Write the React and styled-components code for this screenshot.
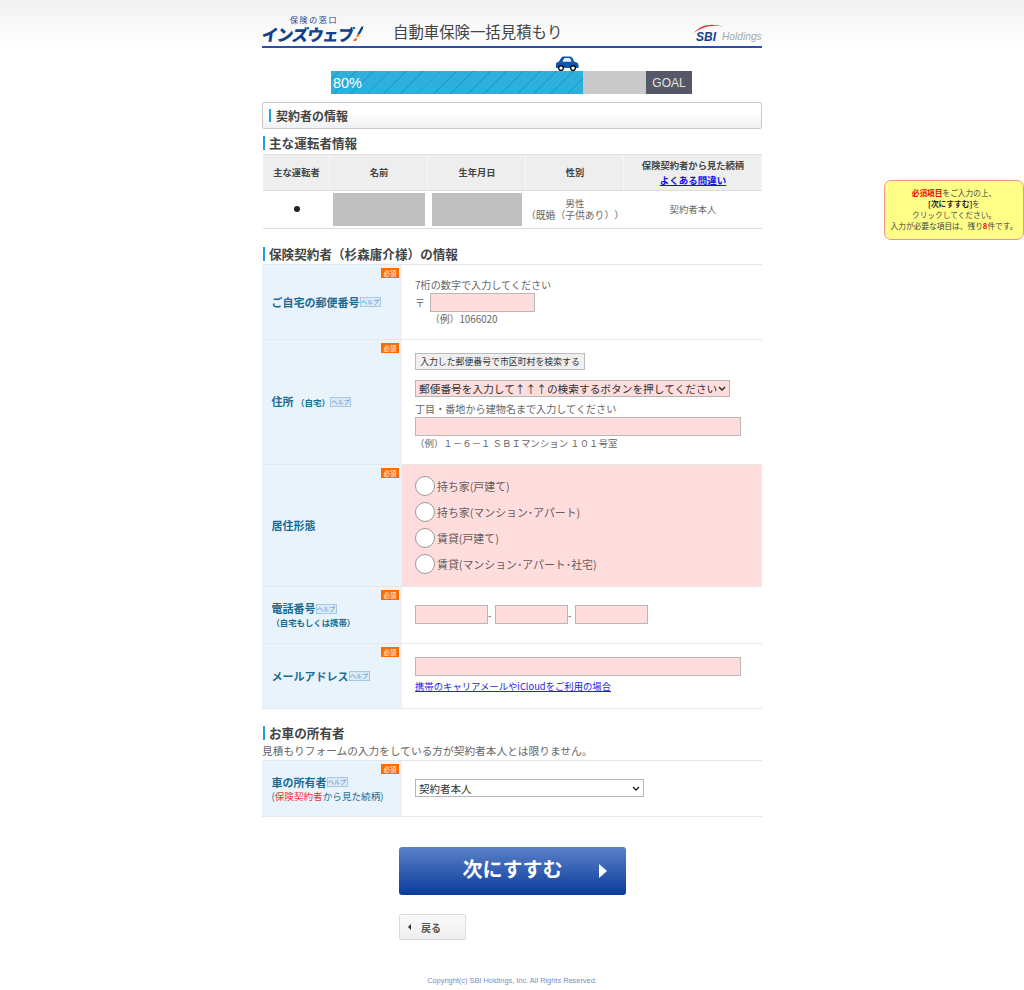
import React from "react";
import styled, { createGlobalStyle } from "styled-components";

const FONT = `"Noto Sans CJK JP", "Liberation Sans", sans-serif`;

const CHEVRON =
  "url(\"data:image/svg+xml,%3Csvg xmlns='http://www.w3.org/2000/svg' width='8' height='5' viewBox='0 0 8 5'%3E%3Cpath d='M1 1l3 3 3-3' fill='none' stroke='%23222' stroke-width='1.4'/%3E%3C/svg%3E\")";

const GlobalStyle = createGlobalStyle`
  html, body {
    margin: 0;
    padding: 0;
    background: #fff;
  }
  body {
    font-family: ${FONT};
    color: #555;
    font-size: 10px;
    text-spacing-trim: space-all;
  }
  * {
    box-sizing: border-box;
  }
`;

const Page = styled.div`
  position: relative;
  height: 990px;
  overflow: hidden;
  background: linear-gradient(#f2f2f2, #fff 50px);
`;

const Container = styled.div`
  width: 500px;
  margin: 0 auto;
  padding-top: 14px;
`;

const Header = styled.header`
  height: 34px;
  border-bottom: 2px solid #2b4ea8;
  display: flex;
  align-items: flex-end;
  position: relative;
`;

const Logo = styled.div`
  width: 131px;
  height: 31px;
  flex: none;
  display: flex;
  flex-direction: column;
  align-items: flex-start;
  line-height: 1;
  .sub {
    font-size: 8px;
    letter-spacing: 1.6px;
    color: #16428f;
    margin-left: 28px;
    height: 9px;
    padding-top: 1px;
  }
  .main {
    display: block;
    font-size: 16.4px;
    font-weight: 900;
    color: #12408c;
    white-space: nowrap;
    letter-spacing: -1.1px;
    line-height: 19px;
    transform: skewX(-8deg);
    b {
      display: inline-block;
      margin-left: 2px;
      font-family: "Liberation Sans", sans-serif;
      font-size: 21px;
      font-style: italic;
      line-height: 19px;
      color: transparent;
      background: linear-gradient(#12408c 55%, #f26a10 55%);
      -webkit-background-clip: text;
      background-clip: text;
      transform: skewX(-14deg);
    }
  }
`;

const Title = styled.h1`
  margin: 0 0 4px;
  font-size: 15.4px;
  font-weight: 400;
  line-height: 22px;
  color: #444;
`;

const Sbi = styled.div`
  margin-left: auto;
  width: 68px;
  height: 24px;
  position: relative;
  display: flex;
  align-items: flex-end;
  padding-bottom: 4px;
  font-family: "Liberation Sans", sans-serif;
  line-height: 10px;
  svg {
    position: absolute;
    left: -1px;
    top: -1px;
  }
  .sbi {
    font-size: 12px;
    font-weight: 700;
    font-style: italic;
    color: #12408c;
    margin-left: 2px;
  }
  .hold {
    font-size: 10.2px;
    font-style: italic;
    color: #a3a8ae;
    margin-left: 6px;
  }
`;

const ProgressWrap = styled.div`
  position: relative;
  width: 361px;
  height: 23px;
  margin: 23px 0 0 69px;
  display: flex;
`;

const ProgressFill = styled.div`
  width: 252px;
  padding-left: 2px;
  font-family: "Liberation Sans", sans-serif;
  font-size: 14.4px;
  line-height: 24px;
  color: #fff;
  background: repeating-linear-gradient(
    -45deg,
    #2fb0dc 0 10.5px,
    #1f9fcf 10.5px 11.8px
  );
`;

const ProgressRest = styled.div`
  flex: 1;
  background: #c9c9c9;
`;

const Goal = styled.div`
  width: 46px;
  background: #555866;
  color: #e4e4e4;
  font-family: "Liberation Sans", sans-serif;
  font-size: 12px;
  line-height: 24px;
  text-align: center;
`;

const Car = styled.svg`
  position: absolute;
  left: 224px;
  top: -15px;
`;

const Panel = styled.div`
  height: 27px;
  margin-top: 8px;
  border: 1px solid #c9c9c9;
  border-radius: 2px;
  background: linear-gradient(#fff 40%, #eff0f2);
  display: flex;
  align-items: center;
  padding-left: 6px;
  font-size: 12px;
  font-weight: 700;
  color: #444;
  &::before {
    content: "";
    width: 2px;
    height: 13px;
    background: #1f9fe0;
    margin-right: 5px;
  }
`;

const Heading = styled.h2`
  margin: ${(p) => p.$top}px 0 0 1px;
  height: 16px;
  display: flex;
  align-items: center;
  font-size: 12.6px;
  font-weight: 700;
  line-height: 16px;
  color: #444;
  &::before {
    content: "";
    width: 2px;
    height: 14px;
    background: #1f9fe0;
    margin-right: 4px;
  }
`;

const DriverTable = styled.div`
  margin: 3px 0 0 1px;
  display: grid;
  grid-template-columns: 67px 98px 98px 98px 138px;
  border-top: 1px solid #e2e2e2;
  border-bottom: 1px solid #ddd;
`;

const HeadCell = styled.div`
  height: 36px;
  background: #eee;
  box-shadow: inset -1px 0 #f8f8f8;
  border-bottom: 1px solid #ddd;
  display: flex;
  flex-direction: column;
  align-items: center;
  justify-content: center;
  font-size: 9.3px;
  font-weight: 700;
  line-height: 15px;
  color: #444;
  a {
    font-size: 9.5px;
    color: #1414e6;
    text-decoration: underline;
  }
`;

const BodyCell = styled.div`
  height: 37px;
  padding-bottom: 1px;
  display: flex;
  flex-direction: column;
  align-items: center;
  justify-content: center;
  font-size: 9.4px;
  line-height: 12px;
  color: #666;
  .wide {
    font-size: 9.8px;
  }
`;

const Dot = styled.span`
  width: 6px;
  height: 6px;
  border-radius: 50%;
  background: #222;
`;

const Masked = styled.div`
  width: ${(p) => p.$w}px;
  height: 33px;
  background: #c0c0c0;
`;

const FormTable = styled.div`
  margin-top: 2px;
  border-top: 1px solid #e6e6e6;
`;

const Row = styled.div`
  display: grid;
  grid-template-columns: 140px 360px;
  height: ${(p) => p.$h}px;
  border-bottom: 1px solid #e6e8ea;
`;

const LabelCell = styled.div`
  position: relative;
  background: #e9f3fb;
  display: flex;
  flex-direction: column;
  justify-content: center;
  padding-left: 9.5px;
  color: #1a6c94;
  font-size: 11px;
  font-weight: 700;
  line-height: 15px;
`;

const LabelLine = styled.div`
  display: flex;
  align-items: center;
  white-space: nowrap;
  small {
    font-size: 8.5px;
  }
`;

const SubLabel = styled.div`
  font-size: ${(p) => (p.$plain ? 9.6 : 8.4)}px;
  font-weight: ${(p) => (p.$plain ? 400 : 700)};
  line-height: 13px;
  white-space: nowrap;
  em {
    font-style: normal;
    color: #f0323c;
  }
`;

const Required = styled.span`
  position: absolute;
  right: 3px;
  top: 3px;
  width: 18px;
  height: 10px;
  background: #ff6a00;
  color: #ffd9bd;
  font-size: 6.5px;
  line-height: 10px;
  text-align: center;
`;

const Help = styled.span`
  display: inline-block;
  width: 21px;
  height: 10px;
  background: #dbe9f7;
  border: 1px solid #a9c8e4;
  color: #4e8fce;
  font-size: 6px;
  font-weight: 400;
  line-height: 8px;
  text-align: center;
`;

const FieldCell = styled.div`
  background: ${(p) => (p.$error ? "#ffdddd" : "#fff")};
  padding: ${(p) => p.$top || 0}px 0 0 13px;
  display: flex;
  flex-direction: column;
  align-items: flex-start;
  font-size: 10px;
  line-height: 14px;
  color: #666;
`;

const Hint = styled.div`
  line-height: 14px;
  font-size: 10.1px;
  margin-top: ${(p) => p.$mt || 0}px;
  margin-bottom: ${(p) => p.$mb || 0}px;
  white-space: nowrap;
`;

const PinkInput = styled.input`
  display: block;
  width: ${(p) => p.$w}px;
  height: 19px;
  padding: 0;
  background: #ffdddd;
  border: 1px solid #bdb6b6;
  outline: none;
`;

const ZipLine = styled.div`
  display: flex;
  align-items: center;
  gap: 5px;
`;

const Example = styled.div`
  margin-left: ${(p) => p.$left}px;
  font-size: ${(p) => p.$size}px;
  line-height: 14px;
  white-space: nowrap;
  color: #666;
`;

const SearchButton = styled.button`
  height: 17px;
  width: 170px;
  padding: 0;
  background: #efefef;
  border: 1px solid #bbb;
  font-family: ${FONT};
  font-size: 8.9px;
  line-height: 14px;
  white-space: nowrap;
  color: #333;
`;

const PickBox = styled.select`
  display: block;
  appearance: none;
  width: ${(p) => p.$w}px;
  height: ${(p) => p.$h}px;
  margin-top: ${(p) => p.$mt || 0}px;
  padding: 0 0 0 3px;
  background: ${(p) => (p.$error ? "#ffdddd" : "#fff")} ${CHEVRON} no-repeat right 3px center;
  border: 1px solid #b5b5b5;
  border-radius: 0;
  font-family: ${FONT};
  font-size: ${(p) => p.$size}px;
  color: #333;
  outline: none;
`;

const RadioRow = styled.label`
  display: flex;
  align-items: center;
  height: 26px;
  gap: 2px;
  font-size: 10.9px;
  color: #665c5c;
  white-space: nowrap;
`;

const Radio = styled.input.attrs({ type: "radio" })`
  appearance: none;
  margin: 0;
  width: 20px;
  height: 20px;
  border-radius: 50%;
  background: #fff;
  border: 1px solid #999;
`;

const PhoneLine = styled.div`
  display: flex;
  align-items: center;
  span {
    width: 7px;
    font-size: 10px;
  }
`;

const TextLink = styled.a`
  margin-top: 3px;
  font-size: 9.35px;
  line-height: 14px;
  color: #2222ee;
  text-decoration: underline;
  white-space: nowrap;
`;

const Note = styled.p`
  margin: 3px 0 0;
  font-size: 10.7px;
  line-height: 14px;
  color: #666;
  white-space: nowrap;
`;

const Actions = styled.div`
  margin: 30px 0 0 137px;
  display: flex;
  flex-direction: column;
  align-items: flex-start;
`;

const NextButton = styled.button`
  position: relative;
  width: 227px;
  height: 48px;
  padding: 0 0 5px 0;
  border: 0;
  border-radius: 3px;
  background: linear-gradient(#5b80c8, #0a3c9c);
  color: #fff;
  font-family: ${FONT};
  font-size: 20px;
  font-weight: 700;
  line-height: 40px;
  text-align: center;
  &::after {
    content: "";
    position: absolute;
    right: 19px;
    top: 17px;
    border-left: 8px solid #fff;
    border-top: 7px solid transparent;
    border-bottom: 7px solid transparent;
  }
`;

const BackButton = styled.button`
  width: 67px;
  height: 26px;
  margin-top: 19px;
  padding: 0 0 0 8px;
  display: flex;
  align-items: center;
  gap: 10px;
  border: 1px solid #ddd;
  border-radius: 2px;
  background: linear-gradient(#fafafa, #eee);
  font-family: ${FONT};
  font-size: 10px;
  font-weight: 700;
  color: #555;
  &::before {
    content: "";
    border-right: 3px solid #333;
    border-top: 3px solid transparent;
    border-bottom: 3px solid transparent;
  }
`;

const Copyright = styled.footer`
  position: absolute;
  left: 0;
  right: 0;
  top: 975px;
  text-align: center;
  font-family: "Liberation Sans", sans-serif;
  font-size: 7.4px;
  line-height: 12px;
  color: #7a8cc0;
`;

const Reminder = styled.aside`
  position: absolute;
  left: 884px;
  top: 180px;
  width: 140px;
  height: 60px;
  background: #ffff88;
  border: 1px solid #f78f8f;
  border-radius: 7px;
  padding-top: 6px;
  text-align: center;
  font-size: 7.7px;
  line-height: 11px;
  color: #444;
  em {
    font-style: normal;
    font-weight: 700;
    color: #f00;
  }
  b {
    color: #222;
  }
`;

const CarIcon = () => (
  <Car width="24" height="15" viewBox="0 0 26 16">
    <path d="M1 13V9c0-1.500 1-2.500 3-2.800l2.500-4C7.300 1 8.500.500 10 .500h6c1.500 0 2.500.800 3.500 2.500l1.500 3c2.500.400 4.500 1.500 4.500 3.500V13z" fill="#0b57ad" />
    <path d="M8 6l1.800-3.500c.200-.400.500-.500 1-.500H15c1 0 1.500.500 2 1.500L18 6z" fill="#e8f1fb" />
    <circle cx="6.500" cy="13" r="2.600" fill="#fff" stroke="#111" strokeWidth="1.500" />
    <circle cx="19.500" cy="13" r="2.600" fill="#fff" stroke="#111" strokeWidth="1.500" />
  </Car>
);

const DRIVER_HEAD = ["主な運転者", "名前", "生年月日", "性別"];
const HOME_TYPES = [
  "持ち家(戸建て)",
  "持ち家(マンション･アパート)",
  "賃貸(戸建て)",
  "賃貸(マンション･アパート･社宅)",
];

export default function App() {
  return (
    <Page>
      <GlobalStyle />
      <Container>
        <Header>
          <Logo>
            <span className="sub">保険の窓口</span>
            <span className="main">
              インズウェブ<b>!</b>
            </span>
          </Logo>
          <Title>自動車保険一括見積もり</Title>
          <Sbi>
            <svg width="32" height="14" viewBox="0 0 32 14">
              <path d="M1 12C6 5 18 1 30 6 20 3 9 6 1 12z" fill="#e8303c" />
            </svg>
            <span className="sbi">SBI</span>
            <span className="hold">Holdings</span>
          </Sbi>
        </Header>

        <ProgressWrap>
          <CarIcon />
          <ProgressFill>80%</ProgressFill>
          <ProgressRest />
          <Goal>GOAL</Goal>
        </ProgressWrap>

        <Panel>契約者の情報</Panel>

        <Heading $top={6}>主な運転者情報</Heading>
        <DriverTable>
          {DRIVER_HEAD.map((h) => (
            <HeadCell key={h}>{h}</HeadCell>
          ))}
          <HeadCell>
            保険契約者から見た続柄
            <a href="#faq">よくある間違い</a>
          </HeadCell>
          <BodyCell>
            <Dot />
          </BodyCell>
          <BodyCell>
            <Masked $w={92} />
          </BodyCell>
          <BodyCell>
            <Masked $w={90} />
          </BodyCell>
          <BodyCell>
            <div>男性</div>
            <div className="wide">（既婚（子供あり））</div>
          </BodyCell>
          <BodyCell>契約者本人</BodyCell>
        </DriverTable>

        <Heading $top={17}>保険契約者（杉森庸介様）の情報</Heading>
        <FormTable>
          <Row $h={75}>
            <LabelCell>
              <Required>必須</Required>
              <LabelLine>
                ご自宅の郵便番号 <Help>ヘルプ</Help>
              </LabelLine>
            </LabelCell>
            <FieldCell $top={13}>
              <Hint $mb={1}>7桁の数字で入力してください</Hint>
              <ZipLine>
                〒
                <PinkInput $w={105} />
              </ZipLine>
              <Example $left={15} $size={9.8}>（例）1066020</Example>
            </FieldCell>
          </Row>

          <Row $h={125}>
            <LabelCell>
              <Required>必須</Required>
              <LabelLine>
                <span>
                  住所 <small>（自宅）</small>
                </span>
                <Help>ヘルプ</Help>
              </LabelLine>
            </LabelCell>
            <FieldCell $top={13}>
              <SearchButton>入力した郵便番号で市区町村を検索する</SearchButton>
              <PickBox $error $w={315} $h={17} $mt={10} $size={10.7}>
                <option>郵便番号を入力して↑↑↑の検索するボタンを押してください</option>
              </PickBox>
              <Hint $mt={5} $mb={1}>丁目・番地から建物名まで入力してください</Hint>
              <PinkInput $w={326} />
              <Example $left={0} $size={9.45}>（例）１－６－１ ＳＢＩマンション １０１号室</Example>
            </FieldCell>
          </Row>

          <Row $h={122}>
            <LabelCell>
              <Required>必須</Required>
              <LabelLine>居住形態</LabelLine>
            </LabelCell>
            <FieldCell $error $top={8}>
              {HOME_TYPES.map((t) => (
                <RadioRow key={t}>
                  <Radio name="home" />
                  {t}
                </RadioRow>
              ))}
            </FieldCell>
          </Row>

          <Row $h={57}>
            <LabelCell>
              <Required>必須</Required>
              <LabelLine>
                電話番号 <Help>ヘルプ</Help>
              </LabelLine>
              <SubLabel>（自宅もしくは携帯）</SubLabel>
            </LabelCell>
            <FieldCell $top={18}>
              <PhoneLine>
                <PinkInput $w={73} />
                <span>-</span>
                <PinkInput $w={73} />
                <span>-</span>
                <PinkInput $w={73} />
              </PhoneLine>
            </FieldCell>
          </Row>

          <Row $h={65}>
            <LabelCell>
              <Required>必須</Required>
              <LabelLine>
                メールアドレス <Help>ヘルプ</Help>
              </LabelLine>
            </LabelCell>
            <FieldCell $top={13}>
              <PinkInput $w={326} />
              <TextLink href="#career">携帯のキャリアメールやiCloudをご利用の場合</TextLink>
            </FieldCell>
          </Row>
        </FormTable>

        <Heading $top={16}>お車の所有者</Heading>
        <Note>見積もりフォームの入力をしている方が契約者本人とは限りません。</Note>
        <FormTable>
          <Row $h={56}>
            <LabelCell>
              <Required>必須</Required>
              <LabelLine>
                車の所有者 <Help>ヘルプ</Help>
              </LabelLine>
              <SubLabel $plain>
                (<em>保険契約者</em>から見た続柄)
              </SubLabel>
            </LabelCell>
            <FieldCell $top={18}>
              <PickBox $w={229} $h={18} $size={10.5}>
                <option>契約者本人</option>
              </PickBox>
            </FieldCell>
          </Row>
        </FormTable>

        <Actions>
          <NextButton>次にすすむ</NextButton>
          <BackButton>戻る</BackButton>
        </Actions>
      </Container>

      <Copyright>Copyright(c) SBI Holdings, Inc. All Rights Reserved.</Copyright>

      <Reminder>
        <div>
          <em>必須項目</em>をご入力の上、
        </div>
        <div>
          <b>[次にすすむ]</b>を
        </div>
        <div>クリックしてください。</div>
        <div>
          入力が必要な項目は、残り<em>8</em>件です。
        </div>
      </Reminder>
    </Page>
  );
}
